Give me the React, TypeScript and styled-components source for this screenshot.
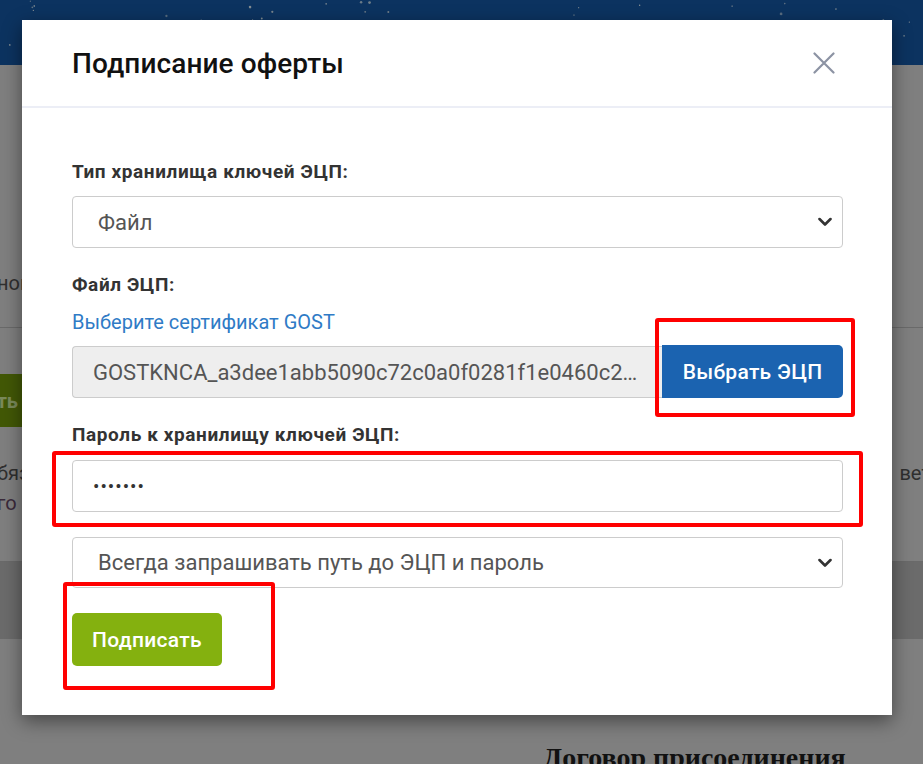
import React from "react";
import styled, { createGlobalStyle } from "styled-components";

const GlobalStyle = createGlobalStyle`
  html, body { margin: 0; padding: 0; }
  body { font-family: Roboto, "Noto Sans", sans-serif; background: #7f7f7f; }
  * { box-sizing: border-box; }
`;

const Page = styled.div`
  position: relative;
  width: 923px;
  height: 764px;
  overflow: hidden;
  background: #7f7f7f;
  display: flex;
  flex-direction: column;
`;

const TopBand = styled.div`
  height: 65px;
  flex: none;
  background: #0c3360;
  display: flex;
`;

const StarsSvg = styled.svg`
  width: 100%;
  height: 100%;
  display: block;
`;

const Section = styled.div<{ $h: number; $dark?: boolean; $line?: boolean }>`
  height: ${(p) => p.$h}px;
  flex: none;
  background: ${(p) => (p.$dark ? "#6b6b6b" : "#7f7f7f")};
  border-bottom: ${(p) => (p.$line ? "1px solid #6a6a6a" : "none")};
  display: flex;
  flex-direction: column;
  overflow: hidden;
`;

const BgRow = styled.div<{ $mt: number }>`
  margin-top: ${(p) => p.$mt}px;
  display: flex;
  justify-content: space-between;
  align-items: center;
  white-space: nowrap;
  font-size: 20px;
  line-height: 24px;
  color: #333;
`;

const BgText = styled.span<{ $shift: number; $color?: string; $end?: number }>`
  margin-left: ${(p) => p.$shift}px;
  margin-right: ${(p) => p.$end ?? 0}px;
  color: ${(p) => p.$color || "#2f2f2f"};
`;

const BgButton = styled.div`
  margin-left: -96px;
  width: 150px;
  height: 53px;
  background: #425806;
  color: #7a8a5a;
  font-weight: 700;
  font-size: 20px;
  display: flex;
  align-items: center;
  justify-content: flex-end;
  padding-right: 36px;
  border-radius: 4px;
`;

const BgHeading = styled.h2`
  margin: 103px 0 0 543px;
  font-family: "Liberation Serif", "DejaVu Serif", serif;
  font-weight: 700;
  font-size: 28px;
  color: #111;
  white-space: nowrap;
`;

const Modal = styled.div`
  position: absolute;
  left: 22px;
  top: 20px;
  width: 870px;
  background: #fff;
  box-shadow: 0 6px 18px rgba(0, 0, 0, 0.45);
  display: flex;
  flex-direction: column;
`;

const ModalHeader = styled.div`
  height: 88px;
  padding: 0 57px 0 50px;
  display: flex;
  align-items: center;
  justify-content: space-between;
  border-bottom: 2px solid #eceef6;
`;

const Title = styled.h3`
  margin: 0;
  font-size: 28px;
  font-weight: 500;
  color: #111;
  letter-spacing: 0.1px;
`;

const CloseButton = styled.button`
  border: none;
  background: none;
  padding: 0;
  width: 22px;
  height: 22px;
  display: flex;
  cursor: pointer;
`;

const ModalBody = styled.div`
  padding: 52px 49px 49px 50px;
  display: flex;
  flex-direction: column;
`;

const Label = styled.div<{ $mt?: number }>`
  margin-top: ${(p) => p.$mt ?? 0}px;
  font-size: 19px;
  line-height: 24px;
  font-weight: 700;
  letter-spacing: 0.6px;
  color: #333;
`;

const Link = styled.a`
  margin-top: 13px;
  font-size: 20px;
  line-height: 24px;
  color: #2f7bc6;
  text-decoration: none;
`;

const SelectWrap = styled.div<{ $mt: number; $h: number }>`
  position: relative;
  margin-top: ${(p) => p.$mt}px;
  height: ${(p) => p.$h}px;
  display: flex;
`;

const Select = styled.select`
  appearance: none;
  width: 100%;
  height: 100%;
  border: 1px solid #ccc;
  border-radius: 4px;
  background: #fff;
  padding: 0 40px 0 25px;
  font-family: Roboto, sans-serif;
  font-size: 22px;
  color: #555;
  outline: none;
`;

const Chevron = styled.svg`
  position: absolute;
  right: 11px;
  top: 50%;
  transform: translateY(-50%);
  width: 14px;
  height: 9px;
  pointer-events: none;
`;

const InputGroup = styled.div`
  position: relative;
  margin-top: 12px;
  height: 52px;
  display: flex;
`;

const FileInput = styled.div`
  flex: 1;
  min-width: 0;
  border: 1px solid #ccc;
  border-right: none;
  border-radius: 4px 0 0 4px;
  background: #eee;
  color: #555;
  font-size: 22px;
  padding: 0 20px 0 20px;
  display: flex;
  align-items: center;
  white-space: nowrap;
  overflow: hidden;
`;

const FileName = styled.span`
  overflow: hidden;
  text-overflow: ellipsis;
`;

const ButtonWrap = styled.div`
  position: relative;
  display: flex;
`;

const BlueButton = styled.button`
  width: 181px;
  height: 53px;
  margin-top: -1px;
  border: none;
  border-radius: 0 5px 5px 0;
  background: #1b63b0;
  color: #fff;
  font-family: Roboto, sans-serif;
  font-size: 21px;
  font-weight: 500;
  letter-spacing: 0.3px;
  cursor: pointer;
`;

const FieldWrap = styled.div<{ $mt: number }>`
  position: relative;
  margin-top: ${(p) => p.$mt}px;
  display: flex;
`;

const PasswordInput = styled.input`
  width: 100%;
  height: 52px;
  border: 1px solid #ccc;
  border-radius: 4px;
  padding: 0 20px;
  font-family: Roboto, sans-serif;
  font-size: 19px;
  letter-spacing: 1px;
  color: #333;
  outline: none;
`;

const GreenButton = styled.button`
  width: 150px;
  height: 53px;
  border: none;
  border-radius: 5px;
  background: #84b10f;
  color: #fff;
  font-family: Roboto, sans-serif;
  font-size: 21px;
  font-weight: 500;
  letter-spacing: 0.3px;
  cursor: pointer;
`;

const SubmitWrap = styled.div`
  position: relative;
  margin-top: 25px;
  display: flex;
`;

const Annotation = styled.div<{ $t: number; $l: number; $r: number; $b: number }>`
  position: absolute;
  top: ${(p) => p.$t}px;
  left: ${(p) => p.$l}px;
  right: ${(p) => p.$r}px;
  bottom: ${(p) => p.$b}px;
  border: 4px solid #ff0000;
  border-radius: 3px;
  pointer-events: none;
`;

function Stars() {
  let seed = 17;
  const rnd = () => {
    seed = (seed * 9301 + 49297) % 233280;
    return seed / 233280;
  };
  const dots = Array.from({ length: 70 }, (_, i) => ({
    x: rnd() * 923,
    y: rnd() * 65,
    r: 0.5 + rnd() * 0.9,
    o: 0.35 + rnd() * 0.5,
    k: i,
  }));
  return (
    <StarsSvg viewBox="0 0 923 65" preserveAspectRatio="none">
      {dots.map((d) => (
        <circle key={d.k} cx={d.x} cy={d.y} r={d.r} fill="#c9c2b0" opacity={d.o} />
      ))}
    </StarsSvg>
  );
}

const ChevronIcon = () => (
  <Chevron viewBox="0 0 14 9">
    <path d="M1.5 1.5 L7 7 L12.5 1.5" fill="none" stroke="#333" strokeWidth="2.6" strokeLinecap="round" strokeLinejoin="round" />
  </Chevron>
);

export default function App() {
  return (
    <>
      <GlobalStyle />
      <Page>
        <TopBand>
          <Stars />
        </TopBand>
        <Section $h={263} $line>
          <BgRow $mt={206}>
            <BgText $shift={-3}>нов</BgText>
          </BgRow>
        </Section>
        <Section $h={234} $line>
          <BgRow $mt={46}>
            <BgButton>ть</BgButton>
          </BgRow>
          <BgRow $mt={34}>
            <BgText $shift={-3}>бяз</BgText>
            <BgText $shift={0} $end={-8}>вет</BgText>
          </BgRow>
          <BgRow $mt={6}>
            <BgText $shift={-3} $color="#3a2a3a">го</BgText>
          </BgRow>
        </Section>
        <Section $h={77} $dark />
        <BgHeading>Договор присоединения</BgHeading>

        <Modal>
          <ModalHeader>
            <Title>Подписание оферты</Title>
            <CloseButton aria-label="Закрыть">
              <svg width="22" height="22" viewBox="0 0 22 22">
                <path d="M1.5 1.5 L20.5 20.5 M20.5 1.5 L1.5 20.5" stroke="#8c93a3" strokeWidth="2.2" strokeLinecap="round" />
              </svg>
            </CloseButton>
          </ModalHeader>
          <ModalBody>
            <Label>Тип хранилища ключей ЭЦП:</Label>
            <SelectWrap $mt={12} $h={52}>
              <Select defaultValue="file">
                <option value="file">Файл</option>
              </Select>
              <ChevronIcon />
            </SelectWrap>

            <Label $mt={25}>Файл ЭЦП:</Label>
            <Link href="#">Выберите сертификат GOST</Link>
            <InputGroup>
              <FileInput>
                <FileName>GOSTKNCA_a3dee1abb5090c72c0a0f0281f1e0460c2fa61b7.p12</FileName>
              </FileInput>
              <ButtonWrap>
                <BlueButton>Выбрать ЭЦП</BlueButton>
                <Annotation $t={-28} $l={-7} $r={-12} $b={-19} />
              </ButtonWrap>
            </InputGroup>

            <Label $mt={25}>Пароль к хранилищу ключей ЭЦП:</Label>
            <FieldWrap $mt={13}>
              <PasswordInput type="password" defaultValue="1234567" readOnly />
              <Annotation $t={-9} $l={-20} $r={-20} $b={-15} />
            </FieldWrap>

            <SelectWrap $mt={25} $h={51}>
              <Select defaultValue="always">
                <option value="always">Всегда запрашивать путь до ЭЦП и пароль</option>
              </Select>
              <ChevronIcon />
            </SelectWrap>

            <SubmitWrap>
              <GreenButton>Подписать</GreenButton>
              <Annotation $t={-31} $l={-9} $r={568} $b={-24} />
            </SubmitWrap>
          </ModalBody>
        </Modal>
      </Page>
    </>
  );
}
